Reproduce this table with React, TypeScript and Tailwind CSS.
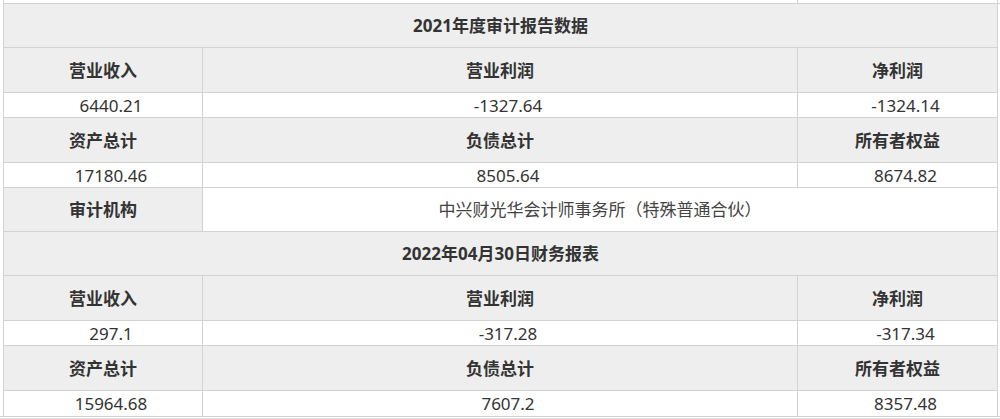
const label = 'flex items-center justify-center bg-[#eeeeee] border-r border-b border-[#d3d3d3] font-bold text-[#333333]'
const value = 'flex items-center justify-center pl-4 bg-white border-r border-b border-[#d3d3d3] text-[#333333]'

type Section = {
  title: string
  rows: [string, string, string][]
  values: [string, string, string][]
}

const sections: Section[] = [
  {
    title: '2021年度审计报告数据',
    rows: [
      ['营业收入', '营业利润', '净利润'],
      ['资产总计', '负债总计', '所有者权益'],
    ],
    values: [
      ['6440.21', '-1327.64', '-1324.14'],
      ['17180.46', '8505.64', '8674.82'],
    ],
  },
  {
    title: '2022年04月30日财务报表',
    rows: [
      ['营业收入', '营业利润', '净利润'],
      ['资产总计', '负债总计', '所有者权益'],
    ],
    values: [
      ['297.1', '-317.28', '-317.34'],
      ['15964.68', '7607.2', '8357.48'],
    ],
  },
]

function Block({ s, last }: { s: Section; last: boolean }) {
  return (
    <>
      <div className={`col-span-3 h-[44px] ${label}`}>{s.title}</div>
      {s.rows.map((r, i) => (
        <div key={i} className="contents">
          {r.map((t) => (
            <div key={t} className={`h-[45px] ${label}`}>{t}</div>
          ))}
          {s.values[i].map((t, j) => (
            <div
              key={j}
              className={`h-[25px] ${value} ${last && i === s.rows.length - 1 ? 'border-b-0' : ''}`}
            >
              {t}
            </div>
          ))}
        </div>
      ))}
    </>
  )
}

export default function App() {
  return (
    <div className="w-[1000px] h-[419px] overflow-hidden bg-white text-[17px] leading-none font-['Noto_Sans','Noto_Sans_CJK_SC',sans-serif]">
      <div className="ml-[3px] grid grid-cols-[199px_595px_200px] h-[3px] border-l border-[#d3d3d3]">
        <div />
        <div className="border-r border-[#d3d3d3]" />
        <div className="border-r border-[#d3d3d3]" />
      </div>
      <div className="ml-[3px] grid grid-cols-[199px_595px_200px] border-l border-t border-[#d3d3d3]">
        <Block s={sections[0]} last={false} />
        <div className={`h-[44px] ${label}`}>审计机构</div>
        <div className="col-span-2 h-[44px] flex items-center justify-center bg-white border-r border-b border-[#d3d3d3] text-[#444444]">
          中兴财光华会计师事务所（特殊普通合伙）
        </div>
        <Block s={sections[1]} last={true} />
      </div>
      <div className="h-[2px] border-t border-[#cfcfcf]" />
      <div className="h-[2px] border-t border-[#dedede]" />
    </div>
  )
}
